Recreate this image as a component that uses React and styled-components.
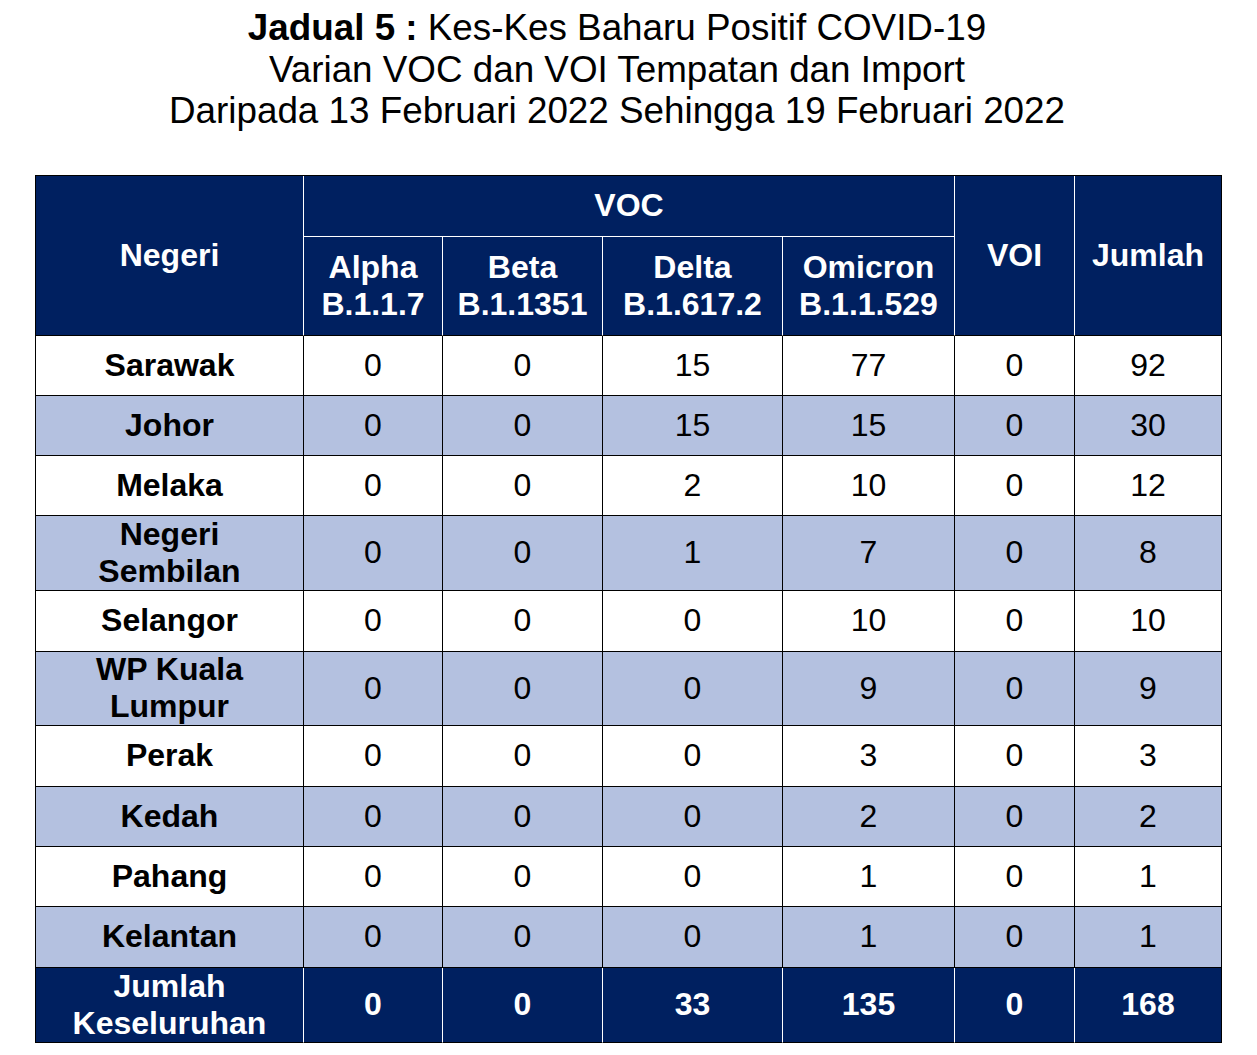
import React from "react";
import styled, { createGlobalStyle } from "styled-components";

const Global = createGlobalStyle`
  html, body { margin: 0; padding: 0; background: #ffffff; }
  body { font-family: "Liberation Sans", Arial, sans-serif; }
`;

const NAVY = "#002060";
const LIGHT = "#B4C1E0";

const Page = styled.div`
  padding: 7px 0 12px 0;
  width: 1257px;
`;

const Title = styled.h1`
  margin: 0;
  padding-right: 23px;
  text-align: center;
  font-family: "Liberation Sans", Arial, sans-serif;
  font-weight: 400;
  font-size: 36.8px;
  line-height: 41.5px;
  color: #000;
`;

const Strong = styled.span`
  font-weight: 700;
`;

const Grid = styled.div`
  margin: 43px 0 0 35px;
  display: grid;
  grid-template-columns: 268px 139px 160px 180px 172px 120px 147px;
  grid-template-rows: 61px 99px 60px 60px 60px 75px 61px 74px 61px 60px 60px 61px 75px;
  width: 1186px;
  border-left: 1px solid #000;
  border-top: 1px solid #000;
`;

const Cell = styled.div`
  display: flex;
  align-items: center;
  justify-content: center;
  text-align: center;
  font-size: 32px;
  line-height: 37px;
  font-weight: ${(p) => (p.$bold ? 700 : 400)};
  color: ${(p) => (p.$tone === "navy" ? "#ffffff" : "#000000")};
  background: ${(p) =>
    p.$tone === "navy" ? NAVY : p.$tone === "light" ? LIGHT : "#ffffff"};
  border-right: 1px solid
    ${(p) => (p.$tone === "navy" && !p.$last ? "#ffffff" : "#000000")};
  border-bottom: 1px solid ${(p) => (p.$whiteBottom ? "#ffffff" : "#000000")};
  grid-row: ${(p) => p.$row || "auto"};
  grid-column: ${(p) => p.$col || "auto"};
`;

const subHeads = [
  ["Alpha", "B.1.1.7"],
  ["Beta", "B.1.1351"],
  ["Delta", "B.1.617.2"],
  ["Omicron", "B.1.1.529"],
];

const rows = [
  [["Sarawak"], 0, 0, 15, 77, 0, 92],
  [["Johor"], 0, 0, 15, 15, 0, 30],
  [["Melaka"], 0, 0, 2, 10, 0, 12],
  [["Negeri", "Sembilan"], 0, 0, 1, 7, 0, 8],
  [["Selangor"], 0, 0, 0, 10, 0, 10],
  [["WP Kuala", "Lumpur"], 0, 0, 0, 9, 0, 9],
  [["Perak"], 0, 0, 0, 3, 0, 3],
  [["Kedah"], 0, 0, 0, 2, 0, 2],
  [["Pahang"], 0, 0, 0, 1, 0, 1],
  [["Kelantan"], 0, 0, 0, 1, 0, 1],
];

const total = [["Jumlah", "Keseluruhan"], 0, 0, 33, 135, 0, 168];

const Lines = ({ parts }) => (
  <span>
    {parts.map((t, i) => (
      <React.Fragment key={i}>
        {i > 0 && <br />}
        {t}
      </React.Fragment>
    ))}
  </span>
);

export default function App() {
  return (
    <Page>
      <Global />
      <Title>
        <Strong>Jadual 5 :</Strong> Kes-Kes Baharu Positif COVID-19
        <br />
        Varian VOC dan VOI Tempatan dan Import
        <br />
        Daripada 13 Februari 2022 Sehingga 19 Februari 2022
      </Title>
      <Grid>
        <Cell $tone="navy" $bold $row="1 / span 2" $col="1">
          Negeri
        </Cell>
        <Cell $tone="navy" $bold $whiteBottom $row="1" $col="2 / span 4">
          VOC
        </Cell>
        <Cell $tone="navy" $bold $row="1 / span 2" $col="6">
          VOI
        </Cell>
        <Cell $tone="navy" $bold $last $row="1 / span 2" $col="7">
          Jumlah
        </Cell>
        {subHeads.map((h, i) => (
          <Cell key={i} $tone="navy" $bold $row="2" $col={`${i + 2}`}>
            <Lines parts={h} />
          </Cell>
        ))}
        {rows.map((r, ri) => {
          const tone = ri % 2 === 1 ? "light" : "white";
          return r.map((v, ci) => (
            <Cell key={`${ri}-${ci}`} $tone={tone} $bold={ci === 0} $last={ci === 6}>
              {ci === 0 ? <Lines parts={v} /> : v}
            </Cell>
          ));
        })}
        {total.map((v, ci) => (
          <Cell key={`t-${ci}`} $tone="navy" $bold $last={ci === 6}>
            {ci === 0 ? <Lines parts={v} /> : v}
          </Cell>
        ))}
      </Grid>
    </Page>
  );
}
